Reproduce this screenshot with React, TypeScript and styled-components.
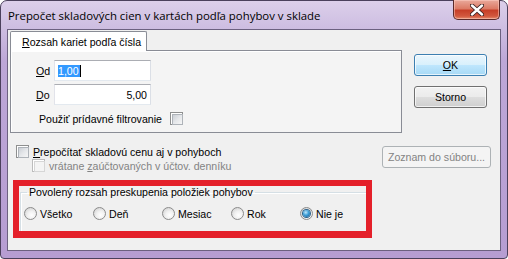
import React from "react";
import styled, { createGlobalStyle } from "styled-components";

const GlobalStyle = createGlobalStyle`
  html, body {
    margin: 0;
    padding: 0;
    overflow: hidden;
    background: #ffffff;
  }
  * {
    box-sizing: border-box;
  }
`;

const uiFont = `"Liberation Sans", Arial, sans-serif`;

const Window = styled.div`
  width: 508px;
  height: 259px;
  display: flex;
  flex-direction: column;
  padding: 0 6px 7px 6px;
  border: 1px solid #4b405c;
  border-radius: 7px 7px 4px 4px;
  background: linear-gradient(
    to bottom,
    #dccfea 0px,
    #cdbde1 28px,
    #bda7d7 60px,
    #b69dd2 100%
  );
`;

const TitleBar = styled.div`
  height: 28px;
  display: flex;
  align-items: flex-start;
  justify-content: space-between;
`;

const Title = styled.div`
  padding: 7px 0 0 1px;
  font-family: "Open Sans", "Noto Sans", sans-serif;
  font-size: 11.4px;
  color: #000;
`;

const CloseButton = styled.div`
  width: 47px;
  height: 20px;
  margin-top: -1px;
  margin-right: 1px;
  display: flex;
  align-items: center;
  justify-content: center;
  border: 1px solid #5a2a2a;
  border-top: none;
  border-radius: 0 0 5px 5px;
  background: linear-gradient(
    to bottom,
    #e9a99b 0%,
    #dc7b66 45%,
    #c73f28 55%,
    #d2583e 85%,
    #e58d6e 100%
  );
  box-shadow: inset 0 0 0 1px rgba(255, 210, 200, 0.5);
`;

const Client = styled.div`
  flex: 1;
  display: flex;
  flex-direction: column;
  background: #f0f0f0;
  border: 1px solid #6c6180;
  font-family: ${uiFont};
  font-size: 10.6px;
  color: #000;
`;

const TopRow = styled.div`
  display: flex;
  align-items: flex-start;
  margin-top: 1px;
  padding-left: 2px;
`;

const TabArea = styled.div`
  width: 392px;
  display: flex;
  flex-direction: column;
`;

const Tab = styled.div`
  position: relative;
  z-index: 1;
  width: 137px;
  height: 20px;
  margin-bottom: -1px;
  padding: 4px 0 0 11px;
  background: #ffffff;
  border: 1px solid #898c95;
  border-bottom: none;
  border-radius: 2px 2px 0 0;
`;

const Panel = styled.div`
  height: 83px;
  padding: 9px 0 0 25px;
  background: #f4f4f4;
  border: 1px solid #898c95;
  box-shadow: inset 1px 1px 0 #ffffff;
`;

const FieldGrid = styled.div`
  display: grid;
  grid-template-columns: 18px 97px;
  grid-auto-rows: 21px;
  row-gap: 3px;
  align-items: end;
`;

const FieldLabel = styled.label`
  padding-bottom: 4px;
`;

const Input = styled.div<{ $align?: "left" | "right" }>`
  height: 21px;
  display: flex;
  align-items: center;
  justify-content: ${(p) => (p.$align === "right" ? "flex-end" : "flex-start")};
  padding: 0 3px;
  background: #ffffff;
  border: 1px solid;
  border-color: #abadb3 #dbdfe6 #e3e9ef #e2e3ea;
`;

const Selected = styled.span`
  background: #3399ff;
  color: #ffffff;
  padding-right: 1px;
  border-right: 1px solid #000;
`;

const CheckRow = styled.label<{ $disabled?: boolean; $indent?: number }>`
  display: flex;
  align-items: center;
  gap: 4px;
  height: 13px;
  padding-left: ${(p) => p.$indent ?? 0}px;
  color: ${(p) => (p.$disabled ? "#838383" : "#000")};
`;

const PanelCheck = styled(CheckRow)`
  margin-top: 7px;
  padding-left: 3px;
  gap: 8px;
`;

const CheckBox = styled.span<{ $disabled?: boolean }>`
  width: 13px;
  height: 13px;
  flex: none;
  border: 1px solid ${(p) => (p.$disabled ? "#bcbcbc" : "#8e8f8f")};
  background: #ffffff;
  padding: 1px;
  &::after {
    content: "";
    display: block;
    width: 100%;
    height: 100%;
    border: 1px solid ${(p) => (p.$disabled ? "#d6d6d6" : "#aeb3b9")};
    background: ${(p) =>
      p.$disabled
        ? "#f4f4f4"
        : "linear-gradient(135deg, #cbcfd5 0%, #e5e7ea 50%, #f6f6f6 100%)"};
  }
`;

const ButtonColumn = styled.div`
  display: flex;
  flex-direction: column;
  gap: 10px;
  margin: 23px 0 0 12px;
`;

const Button = styled.div<{ $variant?: "default" | "normal" | "disabled"; $width?: number }>`
  width: ${(p) => p.$width ?? 73}px;
  height: 22px;
  display: flex;
  align-items: center;
  justify-content: center;
  border-radius: 3px;
  border: 1px solid
    ${(p) =>
      p.$variant === "default"
        ? "#3c7fb1"
        : p.$variant === "disabled"
        ? "#adb2b5"
        : "#707070"};
  background: ${(p) =>
    p.$variant === "default"
      ? "linear-gradient(to bottom, #eaf6fd 0%, #d9f0fc 48%, #bee6fd 52%, #a7d9f5 100%)"
      : p.$variant === "disabled"
      ? "#f4f4f4"
      : "linear-gradient(to bottom, #f2f2f2 0%, #ebebeb 48%, #dddddd 52%, #cfcfcf 100%)"};
  box-shadow: ${(p) =>
    p.$variant === "disabled" ? "none" : "inset 0 0 0 1px rgba(255,255,255,0.7)"};
  color: ${(p) => (p.$variant === "disabled" ? "#838383" : "#000")};
`;

const OptionsRow = styled.div`
  display: flex;
  justify-content: space-between;
  align-items: flex-start;
  margin-top: 12px;
  padding: 0 9px 0 8px;
`;

const OptionsColumn = styled.div`
  display: flex;
  flex-direction: column;
  gap: 1px;
`;

const ZoznamButton = styled(Button)`
  margin-top: 1px;
`;

const Highlight = styled.div`
  width: 359px;
  height: 58px;
  margin: 8px 0 0 5px;
  border: 6px solid #e4202a;
  border-bottom-width: 7px;
  overflow: hidden;
`;

const GroupBox = styled.fieldset`
  margin: 0 0 0 1px;
  padding: 8px 0 0 3px;
  min-width: 0;
  height: 60px;
  border: none;
  border-top: 1px solid #d5dfe5;
  border-left: 1px solid #d5dfe5;
  box-shadow: inset 1px 1px 0 #ffffff;
`;

const Legend = styled.legend`
  margin-left: 3px;
  padding: 0 2px;
  line-height: 13px;
`;

const RadioRow = styled.div`
  display: grid;
  grid-template-columns: repeat(5, 69px);
`;

const RadioOption = styled.label`
  display: flex;
  align-items: center;
  gap: 3px;
  height: 13px;
`;

const Radio = styled.span<{ $checked?: boolean }>`
  width: 13px;
  height: 13px;
  flex: none;
  border-radius: 50%;
  border: 1px solid #8b8b8b;
  background: radial-gradient(circle at 60% 65%, #ffffff 0%, #f1f1f1 40%, #c9c9c9 100%);
  display: flex;
  align-items: center;
  justify-content: center;
  &::after {
    content: "";
    display: ${(p) => (p.$checked ? "block" : "none")};
    width: 7px;
    height: 7px;
    border-radius: 50%;
    background: radial-gradient(circle at 40% 35%, #bfe6fb 0%, #3d9fd7 45%, #0d4f8a 100%);
    box-shadow: 0 0 0 1px #2c628b;
  }
`;

const U = styled.span`
  text-decoration: underline;
`;

const radios = [
  { label: "Všetko" },
  { label: "Deň" },
  { label: "Mesiac" },
  { label: "Rok" },
  { label: "Nie je", checked: true },
];

const App = () => {
  return (
    <>
      <GlobalStyle />
      <Window>
        <TitleBar>
          <Title>Prepočet skladových cien v kartách podľa pohybov v sklade</Title>
          <CloseButton>
            <svg width="14" height="12" viewBox="0 0 14 12">
              <path
                d="M2 1.5 L12 10.5 M12 1.5 L2 10.5"
                stroke="#3a2020"
                strokeWidth="4.2"
                strokeLinecap="round"
              />
              <path
                d="M2 1.5 L12 10.5 M12 1.5 L2 10.5"
                stroke="#ffffff"
                strokeWidth="2.4"
                strokeLinecap="round"
              />
            </svg>
          </CloseButton>
        </TitleBar>
        <Client>
          <TopRow>
            <TabArea>
              <Tab>
                <U>R</U>ozsah kariet podľa čísla
              </Tab>
              <Panel>
                <FieldGrid>
                  <FieldLabel>
                    <U>O</U>d
                  </FieldLabel>
                  <Input>
                    <Selected>1,00</Selected>
                  </Input>
                  <FieldLabel>
                    <U>D</U>o
                  </FieldLabel>
                  <Input $align="right">5,00</Input>
                </FieldGrid>
                <PanelCheck>
                  Použiť prídavné filtrovanie
                  <CheckBox />
                </PanelCheck>
              </Panel>
            </TabArea>
            <ButtonColumn>
              <Button $variant="default">
                <span>
                  <U>O</U>K
                </span>
              </Button>
              <Button>Storno</Button>
            </ButtonColumn>
          </TopRow>
          <OptionsRow>
            <OptionsColumn>
              <CheckRow>
                <CheckBox />
                <span>
                  <U>P</U>repočítať skladovú cenu aj v pohyboch
                </span>
              </CheckRow>
              <CheckRow $disabled $indent={16}>
                <CheckBox $disabled />
                <span>
                  vrátane <U>z</U>aúčtovaných v účtov. denníku
                </span>
              </CheckRow>
            </OptionsColumn>
            <ZoznamButton $variant="disabled" $width={109}>
              Zoznam do súboru...
            </ZoznamButton>
          </OptionsRow>
          <Highlight>
            <GroupBox>
              <Legend>Povolený rozsah preskupenia položiek pohybov</Legend>
              <RadioRow>
                {radios.map((r) => (
                  <RadioOption key={r.label}>
                    <Radio $checked={r.checked} />
                    {r.label}
                  </RadioOption>
                ))}
              </RadioRow>
            </GroupBox>
          </Highlight>
        </Client>
      </Window>
    </>
  );
};

export default App;
